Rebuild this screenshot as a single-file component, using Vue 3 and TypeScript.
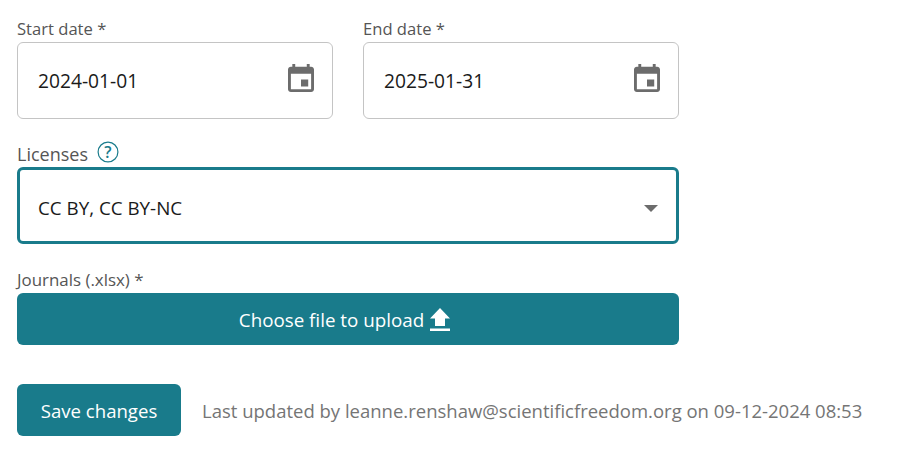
<script setup lang="ts">
const updatedBy = 'leanne.renshaw@scientificfreedom.org'
const updatedAt = '09-12-2024 08:53'
const calendar = 'M19 4h-1V2h-2v2H8V2H6v2H5c-1.1 0-2 .9-2 2v14c0 1.1.9 2 2 2h14c1.1 0 2-.9 2-2V6c0-1.1-.9-2-2-2zm0 16H5V9h14v11zM12 13h5v5h-5z'
const dates = [
  { label: 'Start date *', value: '2024-01-01' },
  { label: 'End date *', value: '2025-01-31' },
]
</script>

<template>
  <div class="page">
    <div class="dates">
      <div v-for="d in dates" :key="d.label" class="field">
        <label class="label">{{ d.label }}</label>
        <div class="input">
          <span class="value date-value">{{ d.value }}</span>
          <svg class="cal" viewBox="3 2 18 20" width="26" height="28" preserveAspectRatio="none"><path :d="calendar" fill="#6c6c6c" /></svg>
        </div>
      </div>
    </div>

    <div class="lic-label">
      <label class="label licenses">Licenses</label>
      <svg class="help" viewBox="0 0 22 22" width="22" height="22">
        <circle cx="11" cy="11" r="9.9" fill="none" stroke="#197b8b" stroke-width="1.2" />
        <text x="11" y="16.8" text-anchor="middle" class="help-q">?</text>
      </svg>
    </div>
    <div class="select">
      <span class="value select-value">CC BY, CC BY-NC</span>
      <span class="caret"></span>
    </div>

    <label class="label journals">Journals (.xlsx) *</label>
    <button class="upload" type="button">
      <span class="btn-text">Choose file to upload</span>
      <svg class="up" viewBox="0 0 20 23" width="20" height="23"><path d="M10 0 20 10.5H15V18H5V10.5H0ZM0 20.5H20V23H0Z" fill="#fff" /></svg>
    </button>

    <div class="actions">
      <button class="save" type="button">Save changes</button>
      <span class="updated">Last updated by {{ updatedBy }} on {{ updatedAt }}</span>
    </div>
  </div>
</template>

<style>
html, body { background: #fff; }
</style>

<style scoped>
.page {
  width: 662px;
  padding: 16px 0 0 17px;
  font-family: "Open Sans", "Noto Sans", sans-serif;
  font-size: 18px;
  box-sizing: content-box;
}
.dates { display: flex; gap: 30px; }
.field { width: 316px; }
.label { display: block; color: #555; font-size: 16.6px; line-height: 26px; height: 26px; }
.input {
  height: 77px;
  box-sizing: border-box;
  border: 1px solid #c4c4c4;
  border-radius: 6px;
  padding: 0 18px 0 20px;
  display: flex;
  align-items: center;
  justify-content: space-between;
}
.value { color: #1a1a1a; font-size: 18.8px; }
.date-value { font-size: 19.2px; }
.select-value { margin-top: 4px; }
.cal { display: block; margin-bottom: 5px; }
.lic-label { display: flex; align-items: center; gap: 9px; margin-top: 20px; height: 28px; }
.licenses { font-size: 18px; margin-top: 2px; }
.help { margin-bottom: 3px; }
.select {
  height: 77px;
  box-sizing: border-box;
  border: 3px solid #197b8b;
  border-radius: 6px;
  padding: 0 18px 0 18px;
  display: flex;
  align-items: center;
  justify-content: space-between;
}
.caret { width: 0; height: 0; margin-top: 6px; border-left: 7px solid transparent; border-right: 7px solid transparent; border-top: 7px solid #6c6c6c; }
.help-q { font-family: "Open Sans", sans-serif; font-size: 16px; font-weight: 600; fill: #197b8b; }
.journals { margin-top: 23px; font-size: 16.9px; }
.upload {
  width: 100%;
  height: 52px;
  border: 0;
  border-radius: 6px;
  background: #197b8b;
  color: #fff;
  font: inherit;
  font-size: 18.8px;
  display: flex;
  align-items: center;
  justify-content: center;
  gap: 6px;
}
.up { margin-right: 7px; }
.btn-text { display: block; padding-top: 2px; }
.actions { display: flex; align-items: center; gap: 21px; margin-top: 39px; width: 880px; }
.save {
  width: 164px;
  height: 52px;
  border: 0;
  border-radius: 6px;
  background: #197b8b;
  color: #fff;
  font: inherit;
  font-size: 18.6px;
}
.updated { color: #757575; font-size: 18.5px; white-space: nowrap; }
</style>
